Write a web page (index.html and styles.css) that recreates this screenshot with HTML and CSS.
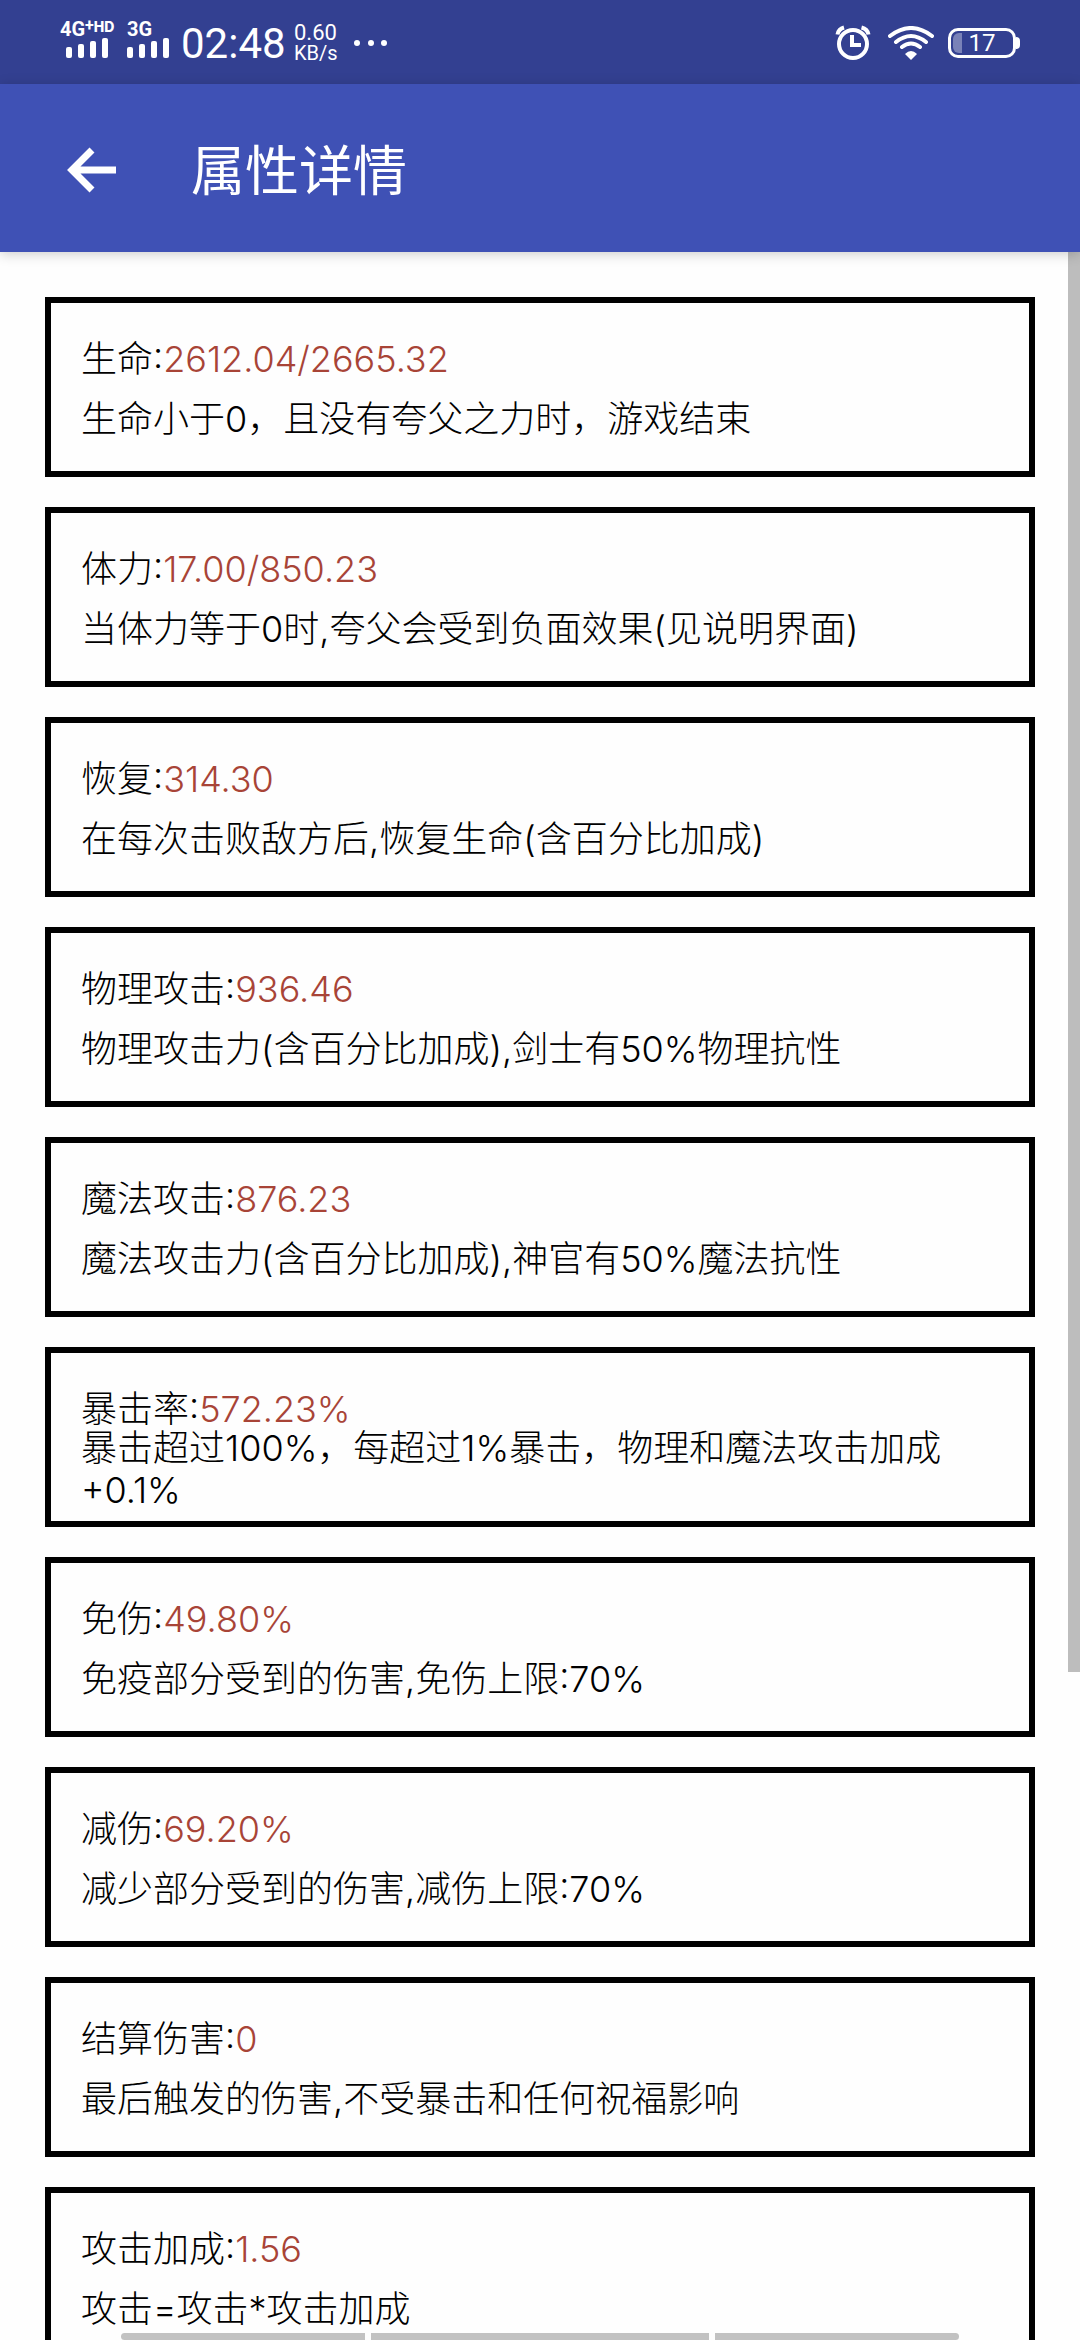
FILE: index.html
```html
<!DOCTYPE html>
<html lang="zh-CN">
<head>
<meta charset="utf-8">
<meta name="viewport" content="width=device-width">
<title>属性详情</title>
<link rel="stylesheet" href="styles.css">
</head>
<body>
<div class="app">
  <div class="status">
    <div class="status-left">
      <div class="signal">
        <span class="net">4G<span class="plus">+</span><span class="hd">HD</span></span>
        <svg class="bars" viewBox="0 0 44 20" width="44" height="20" fill="currentColor"><rect x="0" y="9" width="6" height="11" rx="2"/><rect x="12" y="6" width="6" height="14" rx="2"/><rect x="24" y="3" width="6" height="17" rx="2"/><rect x="36" y="0" width="6" height="20" rx="2"/></svg>
      </div>
      <div class="signal second">
        <span class="net">3G</span>
        <svg class="bars" viewBox="0 0 44 20" width="44" height="20" fill="currentColor"><rect x="0" y="9" width="6" height="11" rx="2"/><rect x="12" y="6" width="6" height="14" rx="2"/><rect x="24" y="3" width="6" height="17" rx="2"/><rect x="36" y="0" width="6" height="20" rx="2"/></svg>
      </div>
      <time class="clock">02:48</time>
      <div class="speed"><span class="rate">0.60</span><span>KB/s</span></div>
      <svg class="dots" viewBox="0 0 34 6" width="34" height="6" fill="currentColor"><circle cx="3" cy="3" r="3"/><circle cx="17" cy="3" r="3"/><circle cx="30" cy="3" r="3"/></svg>
    </div>
    <div class="status-right">
      <svg class="alarm" viewBox="0 0 36 36" width="36" height="36" fill="none" stroke="currentColor"><circle cx="18" cy="19" r="14" stroke-width="4"/><path d="M17 10v10h9" stroke-width="4"/><path d="M2.500 9.500Q3.500 4 9 2.500M26.500 2.500Q32.500 4 33.500 9.500" stroke-width="4"/></svg>
      <svg class="wifi" viewBox="0 0 46 34" width="46" height="34" fill="none" stroke="currentColor" stroke-width="4" stroke-linecap="round"><path d="M2 10Q23-6 44 10M8 16Q23 4 38 16M14 21Q23 14 32 21"/><path d="M17 28Q23 22 29 28L23 34Z" fill="currentColor" stroke="none"/></svg>
      <div class="battery"><span class="level"></span><span class="percent">17</span></div>
    </div>
  </div>
  <header class="toolbar">
    <button class="back" type="button" aria-label="返回">
      <svg viewBox="0 0 50 46" width="50" height="46" fill="none" stroke="currentColor" stroke-width="7"><path d="M26 3L6 23L26 43M5 23H50"/></svg>
    </button>
    <h1>属性详情</h1>
  </header>
  <main class="list">
    <section class="card"><h2>生命:<span class="value">2612.04/2665.32</span></h2><p>生命小于0，且没有夸父之力时，游戏结束</p></section>
    <section class="card"><h2>体力:<span class="value">17.00/850.23</span></h2><p>当体力等于0时,夸父会受到负面效果(见说明界面)</p></section>
    <section class="card"><h2>恢复:<span class="value">314.30</span></h2><p>在每次击败敌方后,恢复生命(含百分比加成)</p></section>
    <section class="card"><h2>物理攻击:<span class="value">936.46</span></h2><p>物理攻击力(含百分比加成),剑士有50%物理抗性</p></section>
    <section class="card"><h2>魔法攻击:<span class="value">876.23</span></h2><p>魔法攻击力(含百分比加成),神官有50%魔法抗性</p></section>
    <section class="card"><h2>暴击率:<span class="value">572.23%</span></h2><p>暴击超过100%，每超过1%暴击，物理和魔法攻击加成+0.1%</p></section>
    <section class="card"><h2>免伤:<span class="value">49.80%</span></h2><p>免疫部分受到的伤害,免伤上限:70%</p></section>
    <section class="card"><h2>减伤:<span class="value">69.20%</span></h2><p>减少部分受到的伤害,减伤上限:70%</p></section>
    <section class="card"><h2>结算伤害:<span class="value">0</span></h2><p>最后触发的伤害,不受暴击和任何祝福影响</p></section>
    <section class="card"><h2>攻击加成:<span class="value">1.56</span></h2><p>攻击=攻击*攻击加成</p></section>
    <div class="scrollbar"></div>
  </main>
  <div class="gestures"><span></span><span class="middle"></span><span></span></div>
</div>
</body>
</html>
```
FILE: styles.css
```css
* { box-sizing: border-box; }

body {
  margin: 0;
  background: #fefefe;
  color: #000;
  font-family: Inter, "Noto Sans CJK SC", sans-serif;
  font-weight: 300;
}

.app {
  position: relative;
  display: flex;
  flex-direction: column;
  height: 100vh;
  overflow: hidden;
}

/* Status bar */
.status {
  flex: none;
  display: flex;
  justify-content: space-between;
  height: 84px;
  padding: 0 60px;
  background: #334091;
  color: #fff;
}

.status-left,
.status-right {
  display: flex;
  align-items: center;
  padding-top: 2px;
}

.signal {
  display: flex;
  flex-direction: column;
  width: 67px;
  padding-bottom: 6px;
}

.signal.second { width: 54px; }
.signal.second .bars { margin-left: 0; }

.net {
  display: flex;
  height: 16px;
  font-family: Roboto, sans-serif;
  font-size: 20px;
  font-weight: 700;
  line-height: 14px;
}

.plus { font-size: 16px; line-height: 8px; }
.hd {
  font-family: Inter, sans-serif;
  font-size: 14px;
  font-weight: 800;
  line-height: 10px;
}
.bars { margin-left: 6px; }

.clock {
  width: 113px;
  font-family: Roboto, sans-serif;
  font-size: 42px;
  font-weight: 400;
  line-height: 48px;
  padding-top: 2px;
}

.speed {
  display: flex;
  flex-direction: column;
  width: 60px;
  font-family: Roboto, sans-serif;
  font-size: 20px;
  font-weight: 400;
  line-height: 20px;
}

.rate { font-size: 22px; }

.alarm { margin-right: 3px; }

.status-right { gap: 14px; }

.battery {
  position: relative;
  display: flex;
  align-items: center;
  justify-content: center;
  width: 68px;
  height: 30px;
  margin-right: 4px;
  border: 3px solid #fff;
  border-radius: 10px;
}

.battery::after {
  content: "";
  position: absolute;
  right: -7px;
  width: 4px;
  height: 12px;
  border-radius: 0 4px 4px 0;
  background: #fff;
}

.level {
  position: absolute;
  left: 2px;
  top: 2px;
  bottom: 2px;
  width: 9px;
  border-radius: 6px 0 0 6px;
  background: #7a82b8;
}

.percent {
  font-family: Roboto, sans-serif;
  font-size: 24px;
  font-weight: 400;
  line-height: 24px;
}

/* Toolbar */
.toolbar {
  position: relative;
  z-index: 1;
  flex: none;
  display: flex;
  align-items: center;
  height: 168px;
  padding: 4px 48px 0;
  background: #3f51b5;
  color: #fff;
  box-shadow: 0 2px 12px rgba(0, 0, 0, .2);
}

.back {
  display: flex;
  width: 86px;
  margin-right: 57px;
  padding: 4px 18px;
  border: 0;
  background: none;
  color: inherit;
}

.back svg { flex: none; }

h1 {
  margin: 0;
  padding-top: 4px;
  font-size: 54px;
  font-weight: 400;
  line-height: 80px;
}

/* Attribute cards */
.list {
  position: relative;
  flex: 1;
  min-height: 0;
  padding: 45px;
  overflow: hidden;
}

.card {
  margin-bottom: 30px;
  padding: 36px 30px 22px;
  border: 6px solid #000;
}

.card h2,
.card p {
  margin: 0;
  font-size: 36px;
  font-weight: 300;
}

.card h2 {
  margin-bottom: 10px;
  line-height: 40px;
}

.card p {
  display: flex;
  align-items: center;
  height: 60px;
  line-height: 42px;
}

.value { color: #a84437; }

.scrollbar {
  position: absolute;
  top: 0;
  right: 0;
  width: 12px;
  height: 68%;
  background: #bdbdbd;
}

/* Gesture hints over the bottom edge */
.gestures {
  position: absolute;
  z-index: 2;
  left: 121px;
  right: 121px;
  bottom: 0;
  display: flex;
  gap: 6px;
  height: 7px;
}

.gestures span { flex: 244; background: #c2c2c2; }
.gestures .middle { flex: 338; }
.gestures span:first-child { border-radius: 4px 0 0 4px; }
.gestures span:last-child { border-radius: 0 4px 4px 0; }
```
